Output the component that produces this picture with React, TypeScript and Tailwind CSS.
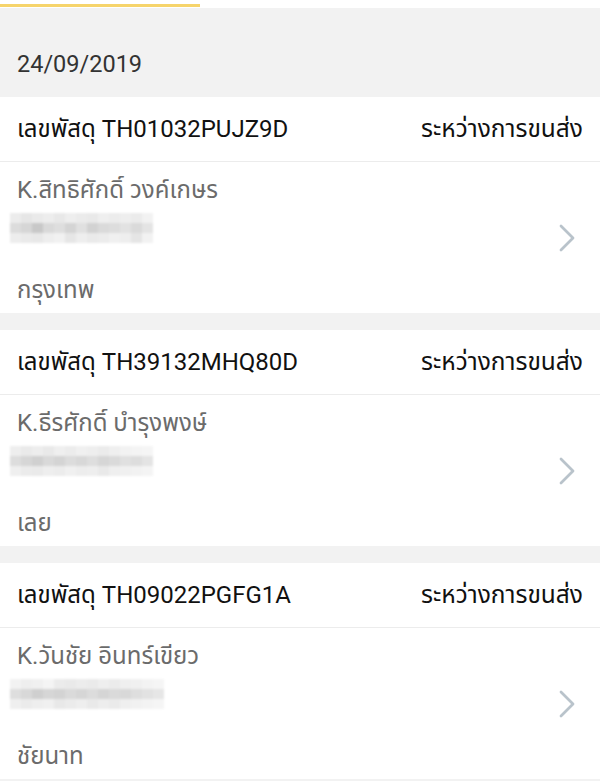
import React from "react";

type Parcel = {
  code: string;
  name: string;
  city: string;
  blur: string[][];
};

const parcels: Parcel[] = [
  {
    code: "TH01032PUJZ9D",
    name: "K.สิทธิศักดิ์ วงค์เกษร",
    city: "กรุงเทพ",
    blur: [
      ["#ececec", "#e6e6e6", "#eaeaea", "#ededed", "#e8e8e8", "#eeeeee", "#ebebeb", "#e9e9e9", "#efefef", "#ececec", "#eeeeee", "#ebebeb", "#f2f2f2"],
      ["#dcdcdc", "#d6d6d6", "#c8c8c8", "#d9d9d9", "#dedede", "#d4d4d4", "#e0e0e0", "#d2d2d2", "#dadada", "#dddddd", "#e2e2e2", "#dadada", "#e4e4e4"],
      ["#ededed", "#eaeaea", "#e8e8e8", "#eeeeee", "#f1f1f1", "#e6e6e6", "#eeeeee", "#eaeaea", "#ececec", "#f0f0f0", "#eeeeee", "#e5e5e5", "#f2f2f2"],
    ],
  },
  {
    code: "TH39132MHQ80D",
    name: "K.ธีรศักดิ์ บำรุงพงษ์",
    city: "เลย",
    blur: [
      ["#eeeeee", "#eaeaea", "#ededed", "#e9e9e9", "#efefef", "#ececec", "#f0f0f0", "#eeeeee", "#ebebeb", "#efefef", "#f2f2f2", "#f4f4f4", "#f5f5f5"],
      ["#dddddd", "#d6d6d6", "#d0d0d0", "#d9d9d9", "#d4d4d4", "#dcdcdc", "#d8d8d8", "#dedede", "#d6d6d6", "#dadada", "#e0e0e0", "#dddddd", "#e4e4e4"],
      ["#efefef", "#ebebeb", "#eaeaea", "#eeeeee", "#ececec", "#f0f0f0", "#ededed", "#eeeeee", "#e9e9e9", "#efefef", "#f0f0f0", "#f2f2f2", "#f4f4f4"],
    ],
  },
  {
    code: "TH09022PGFG1A",
    name: "K.วันชัย อินทร์เขียว",
    city: "ชัยนาท",
    blur: [
      ["#f2f2f2", "#eeeeee", "#f0f0f0", "#f4f4f4", "#ebebeb", "#e9e9e9", "#ececec", "#eaeaea", "#eeeeee", "#ebebeb", "#efefef", "#f0f0f0", "#f3f3f3", "#f5f5f5"],
      ["#dedede", "#d8d8d8", "#cfcfcf", "#d6d6d6", "#d3d3d3", "#dadada", "#d6d6d6", "#dcdcdc", "#d5d5d5", "#dadada", "#d8d8d8", "#dedede", "#e2e2e2", "#e6e6e6"],
      ["#efefef", "#ebebeb", "#eeeeee", "#f0f0f0", "#e8e8e8", "#ebebeb", "#eeeeee", "#e9e9e9", "#ededed", "#eaeaea", "#efefef", "#f1f1f1", "#f3f3f3", "#f5f5f5"],
    ],
  },
];

const Chevron = () => (
  <svg width="18" height="28" viewBox="0 0 18 28" fill="none">
    <path
      d="M3 2 L15 14 L3 26"
      stroke="#b9c3cb"
      strokeWidth="2.8"
      strokeLinecap="round"
      strokeLinejoin="round"
    />
  </svg>
);

const BlurredAddress = ({ rows }: { rows: string[][] }) => (
  <div className="flex flex-col blur-[1px]">
    {rows.map((row, i) => (
      <div key={i} className="flex">
        {row.map((c, j) => (
          <div key={j} className="w-[11px] h-[10px]" style={{ backgroundColor: c }} />
        ))}
      </div>
    ))}
  </div>
);

const ParcelCard = ({ parcel }: { parcel: Parcel }) => (
  <div className="bg-white">
    {/* header */}
    <div className="h-[65px] px-[17px] flex items-center justify-between border-b border-[#ececec] text-[24px] text-[#111]">
      <span>เลขพัสดุ {parcel.code}</span>
      <span className="text-[24.5px]">ระหว่างการขนส่ง</span>
    </div>
    {/* body */}
    <div className="h-[151px] pl-[17px] pr-[24px] flex items-start justify-between">
      <div className="flex flex-col text-[24px] text-[#6b6b6b] pt-[12px]">
        <span className="leading-[32px]">{parcel.name}</span>
        <div className="mt-[7px] ml-[-7px]">
          <BlurredAddress rows={parcel.blur} />
        </div>
        <span className="leading-[32px] mt-[31px]">{parcel.city}</span>
      </div>
      <div className="mt-[62px]">
        <Chevron />
      </div>
    </div>
  </div>
);

export default function App() {
  return (
    <div
      className="w-[600px] h-[781px] overflow-hidden bg-[#f2f2f2]"
      style={{ fontFamily: 'Roboto, "Noto Sans", "Noto Sans Thai", "Liberation Sans", sans-serif' }}
    >
      {/* tab indicator */}
      <div className="h-[8px] bg-white flex items-end">
        <div className="w-[200px] h-[3px] mb-[1px] bg-[#f6d46b]" />
      </div>

      {/* date header */}
      <div className="h-[89px] px-[17px] flex items-end pb-[17px]">
        <span className="text-[23.5px] text-[#333] leading-[32px]">24/09/2019</span>
      </div>

      <div className="flex flex-col gap-[17px]">
        {parcels.map((p) => (
          <ParcelCard key={p.code} parcel={p} />
        ))}
      </div>
    </div>
  );
}
